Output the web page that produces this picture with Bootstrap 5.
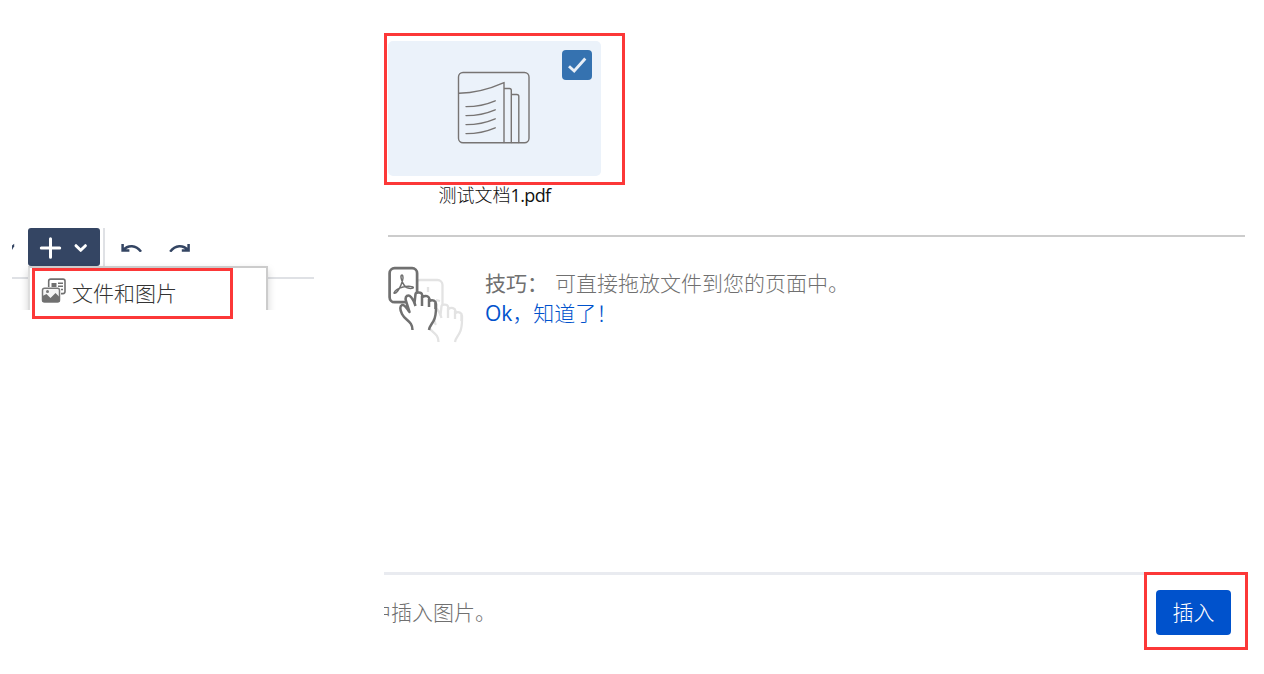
<!DOCTYPE html>
<html lang="zh-CN">
<head>
<meta charset="utf-8">
<meta name="viewport" content="width=device-width, initial-scale=1">
<title>插入文件和图片</title>
<link href="https://cdn.jsdelivr.net/npm/bootstrap@5.3.0/dist/css/bootstrap.min.css" rel="stylesheet">
<style>
  body { font-family: "Open Sans", "Noto Sans CJK SC", sans-serif; font-weight: 300; font-size: 21px; line-height: 30px; color: #707070; background: #fff; }
  .stage { width: 1264px; height: 674px; }
  .outline-red { position: absolute; border: 3px solid #fc3838; pointer-events: none; }
  .editor-pane { width: 302px; height: 82px; margin: 228px 0 0 12px; }
  .toolbar { height: 51px; border-bottom: 2px solid #dfe1e5; }
  .insert-btn { width: 72px; height: 38px; margin-left: 8px; padding: 0; border: 0; border-radius: 3px; background: #344563; }
  .tool-rule { width: 2px; height: 38px; margin-left: 3px; background: #dfe1e5; }
  .insert-menu { position: absolute; left: 16px; top: 38px; width: 240px; height: 60px; padding: 9px 0 0 11px; border: 2px solid #ccc; border-left-color: #ddd; background: #fff; color: #333; box-shadow: 0 4px 8px rgba(0,0,0,.18); line-height: 32px; }
  .menu-label { margin-left: -2px; }
  .dialog-pane { width: 864px; height: 674px; margin-left: 70px; }
  .file-tile { width: 213px; margin: 41px 0 0 4px; }
  .thumb { height: 135px; background: #ebf2fa; border-radius: 5px; }
  .tick { position: absolute; right: 9px; top: 9px; width: 30px; height: 30px; border-radius: 4px; background: #3572b0; }
  .file-name { font-size: 18px; line-height: 24px; margin: 7px 0 1px; color: #111; text-align: center; white-space: nowrap; }
  .file-name .latin { letter-spacing: -.6px; }
  .latin { font-family: "Open Sans", sans-serif; font-weight: 400; }
  .tip { width: 857px; margin: 27px 0 0 4px; padding-top: 29px; border-top: 2px solid #ccc; gap: 21px; }
  .tip-text { padding-top: 2px; }
  .tip-body { margin-left: 7px; }
  .tip-text a { color: #0052cc; }
  .foot { border-top: 3px solid #e9ebf0; height: 102px; padding: 15px 17px 0 0; }
  .foot-note { margin-left: -14px; height: 46px; line-height: 45px; }
  .go-btn { width: 75px; height: 45px; padding: 0; border: 0; border-radius: 4px; background: #0052cc; color: #fff; font-size: 21px; font-weight: 300; line-height: 45px; }
</style>
</head>
<body>
<main class="stage d-flex position-relative overflow-hidden">
  <section class="editor-pane position-relative overflow-hidden flex-shrink-0">
    <div class="toolbar d-flex align-items-start">
      <svg width="8" height="38" viewBox="0 0 8 38"><path d="M0 17.500l2.200-1.800v2.600L0 22z" fill="#344563"/></svg>
      <button class="btn insert-btn d-flex" type="button" aria-label="插入">
        <svg width="72" height="38" viewBox="0 0 72 38" fill="none" stroke="#fff" stroke-width="3" stroke-linecap="round"><path d="M13.300 20h18.400M22.500 10.800v18.400"/><path d="M48 17.700l4.700 4.600 4.700-4.600" stroke-linejoin="round"/></svg>
      </button>
      <div class="tool-rule"></div>
      <svg class="ms-3" width="72" height="24" viewBox="121 228 72 24" fill="none" stroke="#344563" stroke-width="2.500">
        <path d="M122.600 244v6.600h6.800M123 250.200c5-5.600 13-5.600 18 1.500"/>
        <path d="M188.600 244v6.600h-6.800M188.200 250.200c-5-5.600-13-5.600-18 1.500"/>
      </svg>
    </div>
    <div class="insert-menu d-flex align-items-start gap-2">
      <svg class="flex-shrink-0 ms-0" width="25" height="27" viewBox="-0.500 -1 25 27">
        <rect x="7.200" y="1.100" width="16.300" height="14.500" rx="2" fill="#fff" stroke="#707070" stroke-width="1.600"/>
        <path d="M10 5h5v4h-5z" fill="#707070"/><path d="M16.500 5.300h5M16.500 8.300h5M18.500 11.500h3" stroke="#707070" stroke-width="1.500"/>
        <rect x="0" y="9" width="19.500" height="16" rx="2" fill="#fff"/>
        <rect x="1" y="10.300" width="17" height="13.700" rx="2" fill="#f5f5f5" stroke="#777" stroke-width="1.500"/>
        <path d="M1 18l4-2 4 4 5-5 4 4v5H1z" fill="#707070"/><circle cx="6" cy="13.600" r="1.500" fill="#777"/>
      </svg>
      <span class="menu-label">文件和图片</span>
    </div>
  </section>

  <section class="dialog-pane d-flex flex-column flex-shrink-0 overflow-hidden">
    <div class="file-tile">
      <div class="thumb position-relative">
        <svg class="position-absolute" style="left:69px;top:30px" width="74" height="74" viewBox="457 71 74 74" fill="none" stroke="#777473" stroke-width="1.400" stroke-linecap="round">
          <rect x="458.500" y="72.500" width="70.500" height="70.300" rx="4.500"/>
          <path d="M459 93.200c15.500 0 28-3 45-10.500V142.500M504 88.500h5.500q1.800 0 1.800 1.800V142.500M511.300 94.500h5.500q2 0 2 2V142.500"/>
          <path d="M466 106.600c11 0 18-1 29.200-5.800M466 115.600c11 0 18-1 29.200-5.800M466 124.600c11 0 18-1 29.200-5.800M466 133.600c11 0 18-1 29.200-5.800"/>
        </svg>
        <span class="tick d-flex"><svg width="30" height="30" viewBox="0 0 30 30" fill="none" stroke="#e8eff7" stroke-width="2.900"><path d="M7 16.200l5.200 4.800L23.300 8.500"/></svg></span>
      </div>
      <div class="file-name">测试文档<span class="latin">1.pdf</span></div>
    </div>

    <div class="tip d-flex align-items-start">
      <svg class="flex-shrink-0" width="76" height="78" viewBox="0 0 76 78" fill="none" stroke-linecap="butt" stroke-linejoin="round">
        <defs>
          <g id="drag-hand">
            <path d="M24.500 64c0-9-7-9-10.500-16-2.500-5-2-8 0-9 3-1 5 4 7.500 7L18 35c-1-3 0-5.500 2.500-5.500 2 0 3.500 2 6 7.500l1-9c.5-2 6-2 6.500.500l.5 2.500c3-2 6.500-1 7 2v2c3-2 6.500 0 6.500 3 0 6 .5 12-2.500 17-1.500 3-4 5-4.500 9" fill="#fff"/>
            <path d="M26.500 37l1 3M34 30v10M41 33v8M47.500 37v6"/>
          </g>
        </defs>
        <g stroke="#e3e3e3" stroke-width="2.300">
          <rect x="27" y="14" width="27.500" height="34" rx="5"/>
          <path d="M40 21v5M40 29l-1 4M48 34l4 1"/>
          <use href="#drag-hand" x="26" y="12"/>
        </g>
        <rect x="1.600" y="2.200" width="27.500" height="34" rx="5" stroke="#707070" stroke-width="2.700" fill="#fff"/>
        <path d="M14 9c-2.500 0 0 7 2 10s6 4 9 3c2-2-6-2-10-1s-8 3-9 6c2 1 5-3 7-8s3-9 1-10z" stroke="#707070" stroke-width="1.500"/>
        <use href="#drag-hand" stroke="#707070" stroke-width="2.500"/>
      </svg>
      <div class="tip-text">
        <div class="d-flex"><b class="tip-head">技巧：</b><span class="tip-body">可直接拖放文件到您的页面中。</span></div>
        <a class="text-decoration-none" href="#"><span class="latin">Ok</span>，知道了！</a>
      </div>
    </div>

    <div class="foot d-flex justify-content-between mt-auto">
      <div class="foot-note">中插入图片。</div>
      <button class="btn go-btn" type="button">插入</button>
    </div>
  </section>

  <div class="outline-red" style="left:384px;top:33px;width:241px;height:152px"></div>
  <div class="outline-red" style="left:32px;top:268px;width:201px;height:51px"></div>
  <div class="outline-red" style="left:1144px;top:572px;width:104px;height:78px"></div>
</main>
<script src="https://cdn.jsdelivr.net/npm/bootstrap@5.3.0/dist/js/bootstrap.bundle.min.js"></script>
</body>
</html>
